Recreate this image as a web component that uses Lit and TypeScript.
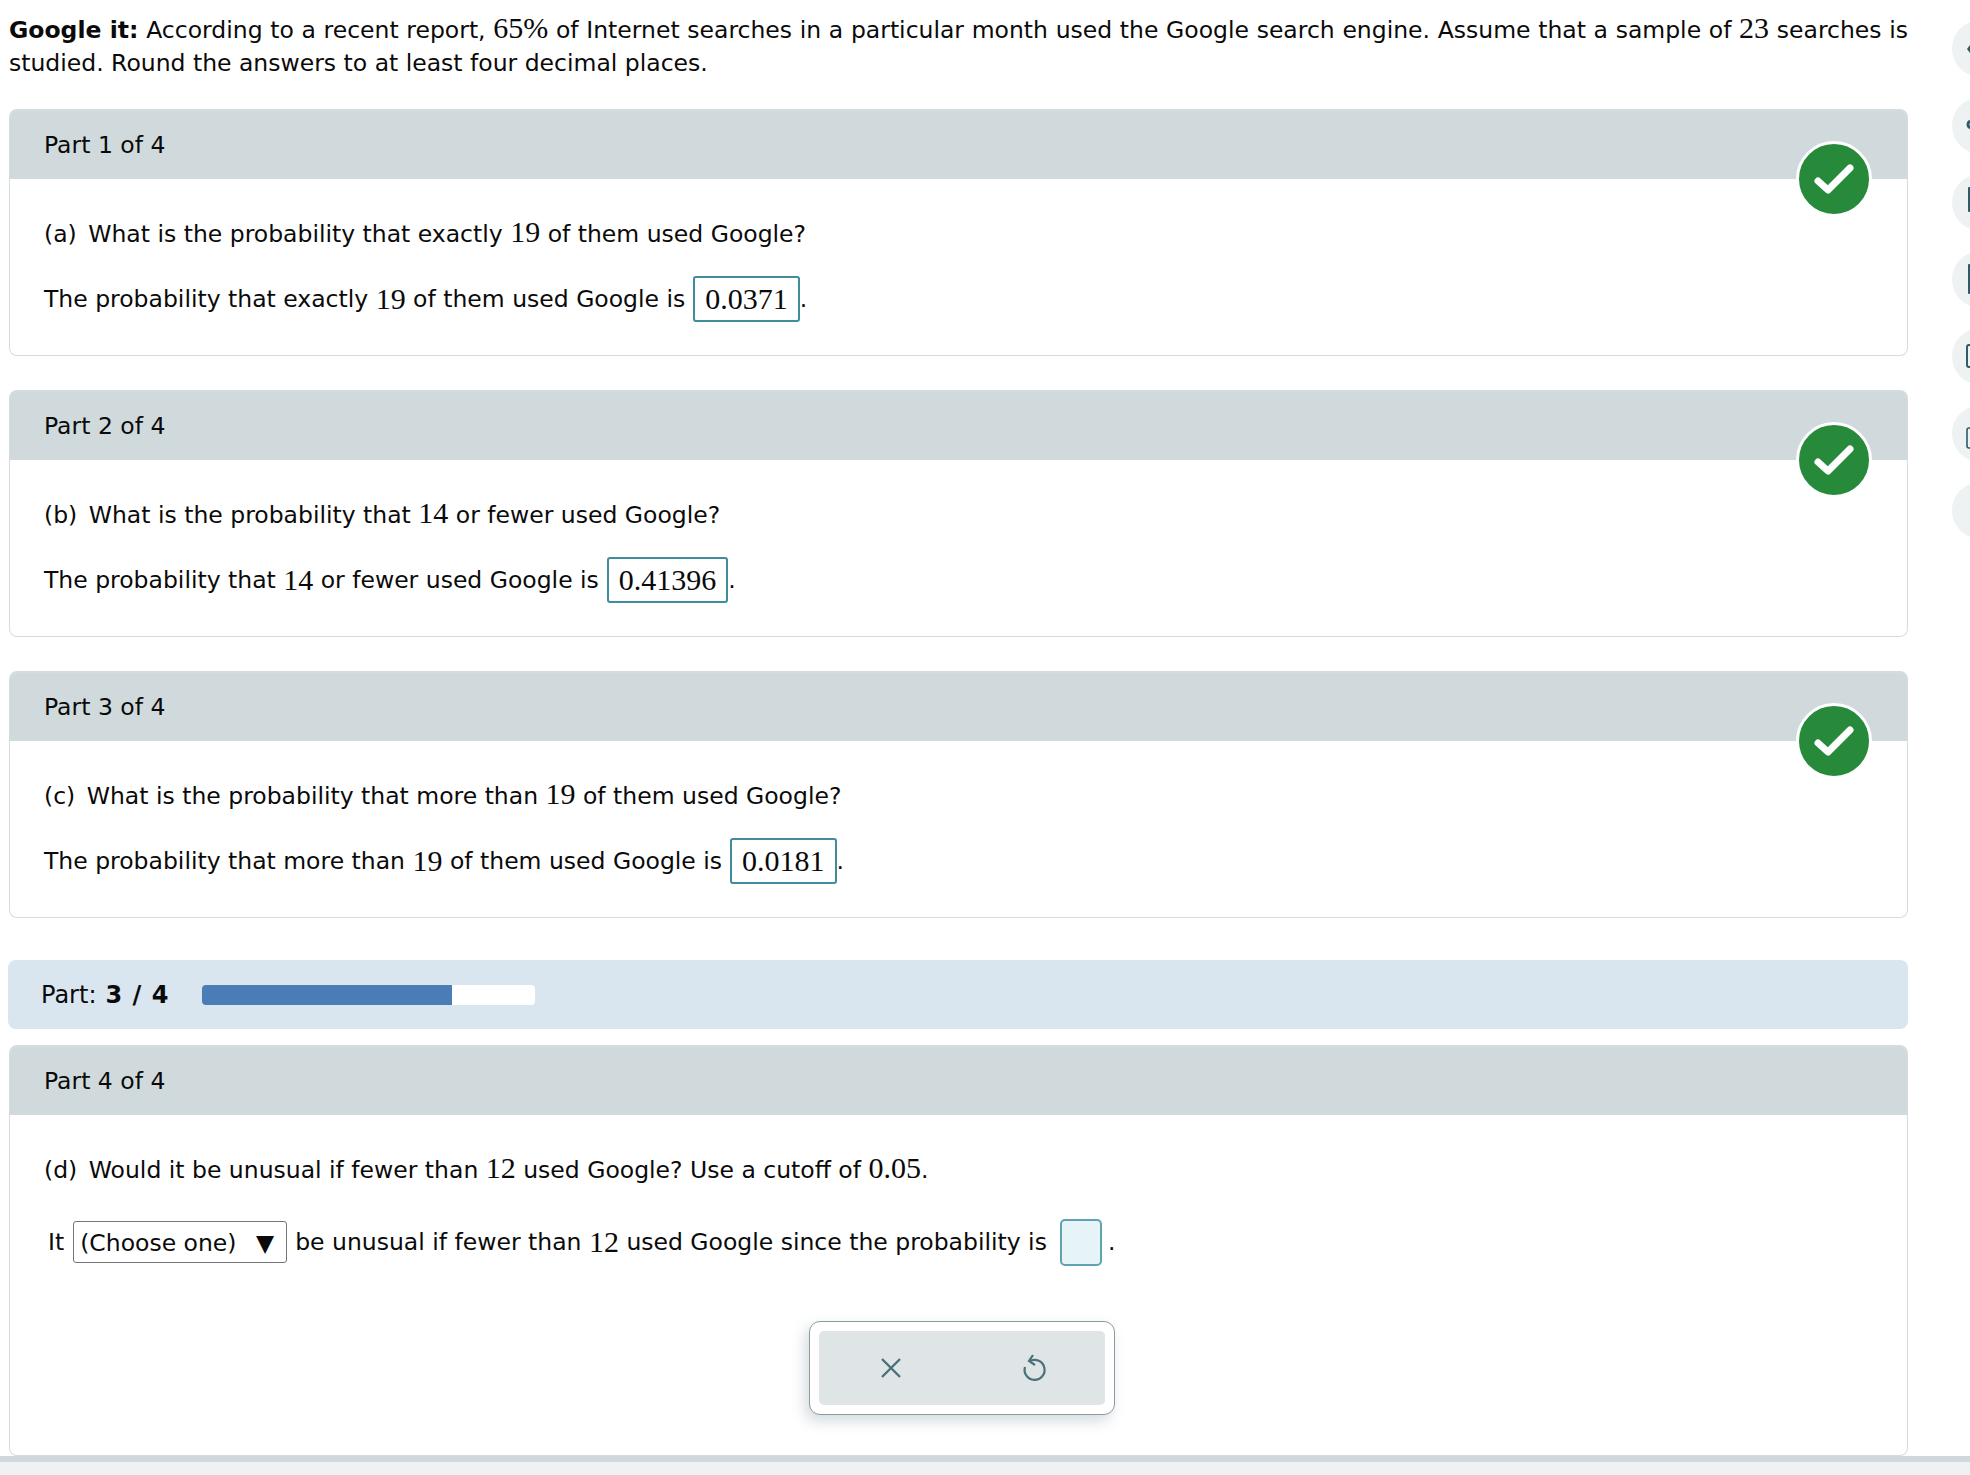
import { LitElement, html, css, svg } from 'lit';
import { customElement } from 'lit/decorators.js';

const num = (n: string) => html`<span class="m">${n}</span>`;

// little pieces of the side rail icons that stick into the window
const railIcons = [
  svg`<path d="M15 29 L18 25 V33 Z" fill="#2f5a68"/>`,
  svg`<path d="M18 24 A4 4 0 0 0 18 31" fill="none" stroke="#2f5a68" stroke-width="3"/>`,
  svg`<rect x="16" y="13" width="4" height="25" rx="1" fill="#2f5a68"/>`,
  svg`<rect x="16" y="13" width="4" height="30" rx="1" fill="#2f5a68"/>`,
  svg`<rect x="15" y="17" width="8" height="22" rx="2" fill="none" stroke="#2f5a68" stroke-width="2"/>`,
  svg`<rect x="15" y="23" width="8" height="20" rx="2" fill="none" stroke="#2f5a68" stroke-width="1.6"/>`,
  svg``,
];

@customElement('app-root')
export class AppRoot extends LitElement {
  static styles = css`
    :host {
      display: block;
      width: 1970px;
      height: 1475px;
      overflow: hidden;
      background: #fff;
      color: #0a0a0a;
      font-family: "DejaVu Sans", sans-serif;
      font-size: 23.5px;
    }
    .page { display: flex; height: 1456px; }
    .main { width: 1899px; margin-left: 9px; flex: none; }
    .intro { margin: 0 0 29px; padding-top: 13px; line-height: 33px; text-align: justify; }
    .m { font-family: "Liberation Serif", serif; font-size: 30px; line-height: 1; }
    .card {
      position: relative;
      border: 1px solid #d6dbde;
      border-top-width: 2px;
      border-radius: 8px;
      height: 247px;
      box-sizing: border-box;
      margin-bottom: 34px;
    }
    .card.last { height: 411px; margin-bottom: 0; }
    .head {
      height: 68px;
      background: #d0d9dc;
      border-radius: 6px 6px 0 0;
      display: flex;
      align-items: center;
      padding-left: 34px;
    }
    .check {
      position: absolute;
      right: 35px;
      top: 30px;
      width: 70px;
      height: 70px;
      border-radius: 50%;
      background: #268a3a;
      border: 3px solid #fff;
      display: flex;
      align-items: center;
      justify-content: center;
    }
    .body { padding: 0 34px; }
    .q { margin: 0; padding-top: 38px; line-height: 33px; }
    .lab { margin-right: 4px; }
    .ans { margin: 0; padding-top: 25px; line-height: 33px; display: flex; align-items: center; white-space: pre; }
    .box {
      border: 2px solid #3f8c9c;
      border-radius: 3px;
      height: 46px;
      box-sizing: border-box;
      padding: 0 10px;
      margin-left: 8px;
      display: flex;
      align-items: center;
    }
    .progress {
      height: 69px;
      background: #d9e5ef;
      border-radius: 8px;
      margin: 42px 0 16px -1px;
      padding-left: 33px;
      display: flex;
      align-items: center;
      font-size: 24px;
    }
    .progress b { margin-left: 9px; letter-spacing: 1px; }
    .track { width: 333px; height: 20px; margin-left: 33px; background: #fff; border-radius: 4px; overflow: hidden; }
    .fill { height: 100%; background: #4a7db5; }
    .sel-row { margin: 0; padding: 31px 0 0 4px; display: flex; align-items: center; white-space: pre; height: 48px; }
    .sel {
      width: 214px;
      height: 42px;
      margin-left: 9px;
      margin-right: 8px;
      box-sizing: border-box;
      border: 1px solid #767676;
      border-radius: 3px;
      display: flex;
      align-items: center;
      justify-content: space-between;
      padding: 2px 12px 0 6px;
    }
    .blank {
      width: 42px;
      height: 47px;
      box-sizing: border-box;
      margin-left: 13px;
      margin-right: 6px;
      background: #e6f4f8;
      border: 2px solid #5fa3b3;
      border-radius: 5px;
    }
    .tools {
      width: 306px;
      height: 94px;
      box-sizing: border-box;
      margin: 55px 0 0 765px;
      padding: 9px;
      border: 1px solid #8d9ba1;
      border-radius: 11px;
      box-shadow: -4px 6px 14px rgba(60, 90, 110, 0.22);
      background: #fff;
    }
    .tools-in {
      height: 100%;
      background: #dfe5e7;
      border-radius: 5px;
      display: grid;
      grid-template-columns: 1fr 1fr;
      place-items: center;
    }
    .rail { margin-left: 44px; padding-top: 20px; display: flex; flex-direction: column; gap: 20px; flex: none; }
    .dot { width: 57px; height: 57px; border-radius: 50%; background: #eef2f3; }
    .dot svg { display: block; }
    .foot { height: 19px; border-top: 6px solid #d0d8db; background: #eef2f3; box-sizing: border-box; }
  `;

  private checkIcon() {
    return html`<svg width="44" height="36" viewBox="0 0 44 36"><path d="M6 20 L16 29 L38 7" fill="none" stroke="#fff" stroke-width="7" stroke-linecap="round" stroke-linejoin="round"/></svg>`;
  }

  private part(n: number, letter: string, q: unknown, a: unknown, value: string) {
    return html`<section class="card">
      <div class="head">Part ${n} of 4</div>
      <div class="check">${this.checkIcon()}</div>
      <div class="body">
        <p class="q"><span class="lab">(${letter})</span> What is the probability ${q}</p>
        <p class="ans">${a}<span class="box m">${value}</span>.</p>
      </div>
    </section>`;
  }

  render() {
    return html`
      <div class="page">
        <div class="main">
          <p class="intro"><b>Google it:</b> According to a recent report, ${num('65%')} of Internet searches in a particular month used the Google search engine. Assume that a sample of ${num('23')} searches is studied. Round the answers to at least four decimal places.</p>
          ${this.part(1, 'a', html`that exactly ${num('19')} of them used Google?`, html`The probability that exactly ${num('19')} of them used Google is`, '0.0371')}
          ${this.part(2, 'b', html`that ${num('14')} or fewer used Google?`, html`The probability that ${num('14')} or fewer used Google is`, '0.41396')}
          ${this.part(3, 'c', html`that more than ${num('19')} of them used Google?`, html`The probability that more than ${num('19')} of them used Google is`, '0.0181')}
          <div class="progress">Part: <b>3 / 4</b><div class="track"><div class="fill" style="width:75%"></div></div></div>
          <section class="card last">
            <div class="head">Part 4 of 4</div>
            <div class="body">
              <p class="q"><span class="lab">(d)</span> Would it be unusual if fewer than ${num('12')} used Google? Use a cutoff of ${num('0.05')}.</p>
              <div class="sel-row">It<span class="sel"><span>(Choose one)</span><span>▼</span></span>be unusual if fewer than ${num('12')} used Google since the probability is<span class="blank"></span>.</div>
              <div class="tools"><div class="tools-in">
                <svg width="24" height="24" viewBox="0 0 24 24">${svg`<path d="M3 3 L21 21 M21 3 L3 21" fill="none" stroke="#4a7078" stroke-width="2.4"/>`}</svg>
                <svg width="26" height="30" viewBox="0 0 26 30">${svg`<path d="M9 8 A10 10 0 1 1 4 14" fill="none" stroke="#4a7078" stroke-width="2.2"/><path d="M12 2 L8 8 L14 12" fill="none" stroke="#4a7078" stroke-width="2.2"/>`}</svg>
              </div></div>
            </div>
          </section>
        </div>
        <div class="rail">
          ${railIcons.map((ic) => html`<div class="dot"><svg width="57" height="57" viewBox="0 0 57 57">${ic}</svg></div>`)}
        </div>
      </div>
      <div class="foot"></div>
    `;
  }
}
